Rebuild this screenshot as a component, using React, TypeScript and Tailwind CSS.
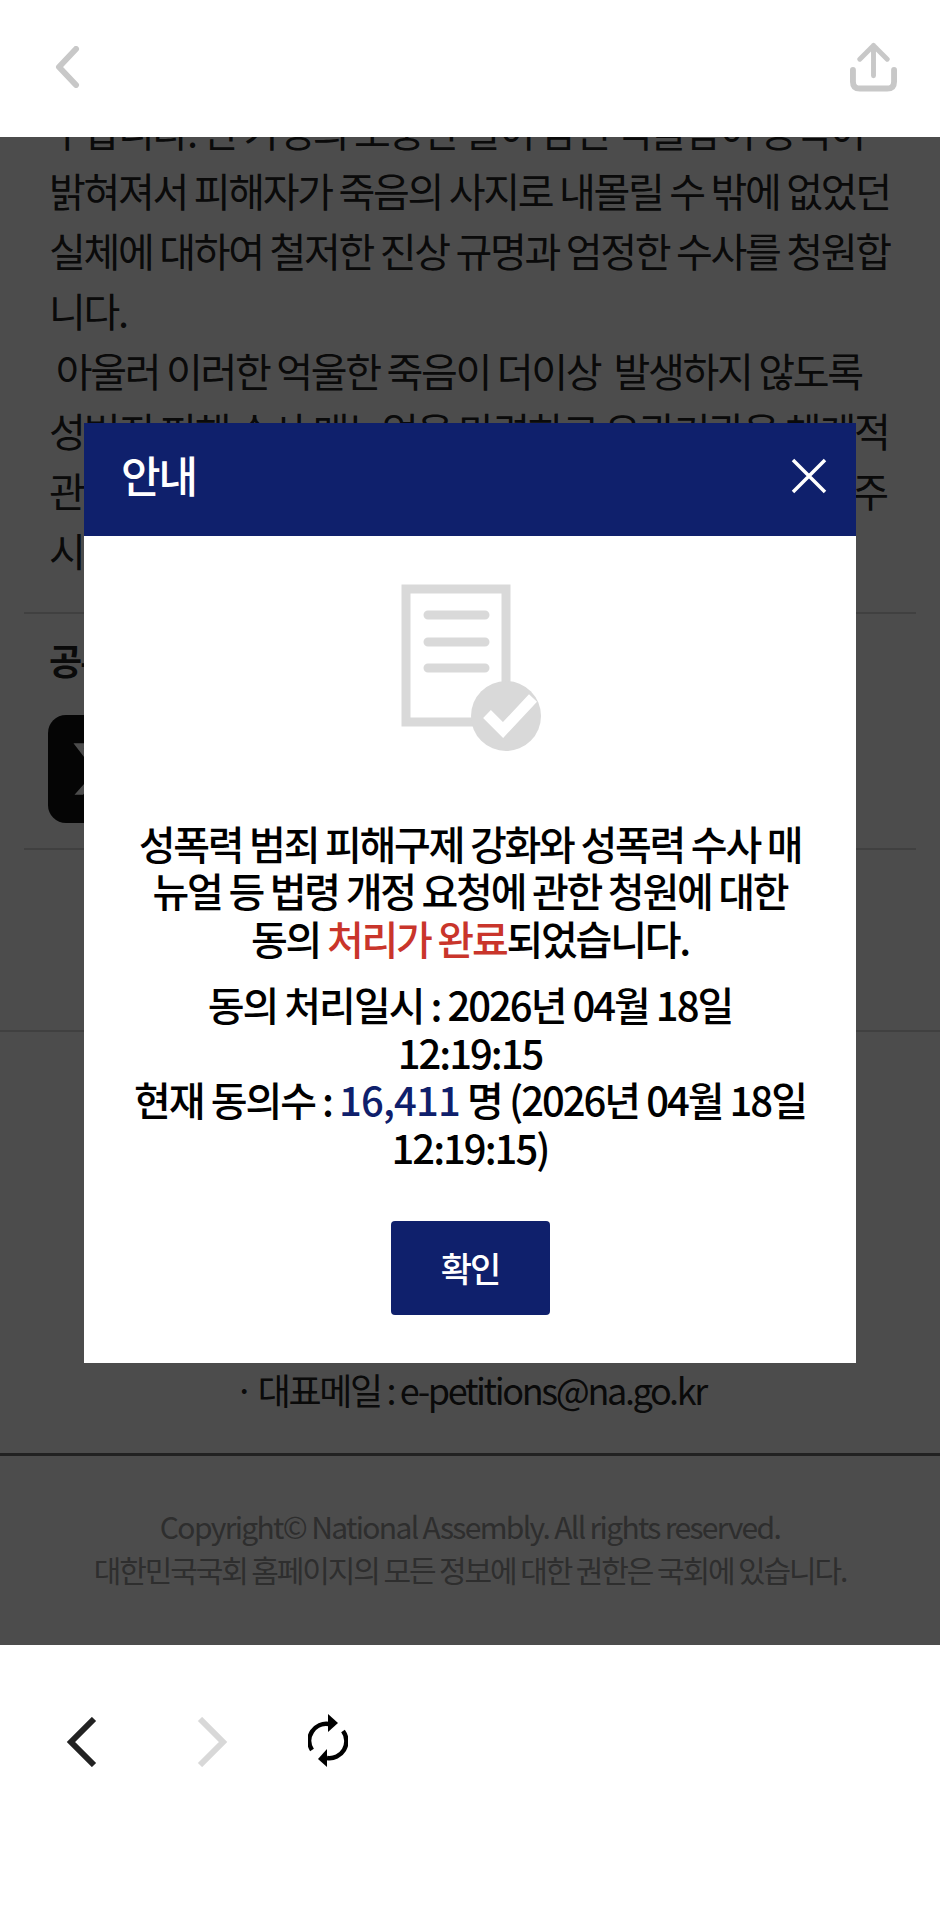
export default function App() {
  return (
    <div className="w-[940px] h-[1920px] flex flex-col bg-white overflow-hidden font-['Noto_Sans_CJK_KR','Noto_Sans',sans-serif] text-[#222]">
      {/* Top bar */}
      <header className="h-[137px] shrink-0 flex items-center justify-between pl-[54px] pr-[43px] pb-[4px]">
        <svg width="26" height="42" viewBox="0 0 26 42" fill="none" stroke="#c8c8c8" strokeWidth="6" strokeLinecap="round" strokeLinejoin="round">
          <path d="M22 3 L5 21 L22 39" />
        </svg>
        <svg width="47" height="50" viewBox="0 0 48 50" fill="none" stroke="#c8c8c8" strokeLinecap="round" strokeLinejoin="round">
          <path d="M24 3 V34 M10 17 L24 3 L38 17" strokeWidth="5" />
          <path d="M3 28 V40 Q3 47 10 47 H38 Q45 47 45 40 V28" strokeWidth="6" />
        </svg>
      </header>

      {/* Page under the dialog */}
      <main className="relative h-[1508px] shrink-0 overflow-hidden">
        <div className="-mt-[37px]">
          <div className="pl-[49px] text-[40px] leading-[60px] tracking-[-0.057em] whitespace-nowrap">
            <div>구합니다. 한 가정의 소중한 딸이 남긴 억울함이 공식이</div>
            <div>밝혀져서 피해자가 죽음의 사지로 내몰릴 수 밖에 없었던</div>
            <div>실체에 대하여 철저한 진상 규명과 엄정한 수사를 청원합</div>
            <div>니다.</div>
            <div className="whitespace-pre"> 아울러 이러한 억울한 죽음이 더이상  발생하지 않도록</div>
            <div className="tracking-[-0.052em]">성범죄 피해 수사 매뉴얼을 마련하고 유관기관을 체계적</div>
            <div className="tracking-[-0.065em]">관리가 이루어질 수 있도록 법령 개정을 적극 추진하여 주</div>
            <div>시기 바랍니다.</div>
          </div>

          <div className="mx-[24px] mt-[32px] border-t-2 border-[#d5d5d5]" />
          <div className="pl-[49px] pt-[20px] text-[36px] leading-[50px] font-bold tracking-[-0.05em]">공유하기</div>
          <div className="ml-[48px] mt-[31px] w-[108px] h-[108px] rounded-[18px] bg-[#111] flex items-center justify-center">
            <svg width="64" height="64" viewBox="0 0 24 24" fill="#fff">
              <path d="M18.2 2.3h3.3l-7.2 8.2 8.5 11.2h-6.7l-5.2-6.8-6 6.8H1.7l7.7-8.8L1.3 2.3h6.8l4.7 6.2zm-1.2 17.5h1.8L7.1 4.1h-2z" />
            </svg>
          </div>
          <div className="mx-[24px] mt-[25px] border-t-2 border-[#d5d5d5]" />
          <div className="mt-[180px] border-t-2 border-[#d5d5d5]" />

          <footer className="h-[421px] flex items-end justify-center pb-[39px] text-[36px] leading-[50px] tracking-[-0.066em]">
            <div>· 대표메일 : e-petitions@na.go.kr</div>
          </footer>
          <div className="border-t-[3px] border-[#6e6e6e]" />
          <div className="pt-[49px] text-center text-[30px] leading-[43px] text-[#999]">
            <div className="tracking-[-0.055em]">Copyright© National Assembly. All rights reserved.</div>
            <div className="tracking-[-0.07em]">대한민국국회 홈페이지의 모든 정보에 대한 권한은 국회에 있습니다.</div>
          </div>
        </div>

        {/* Overlay and dialog */}
        <div className="absolute inset-0 bg-black/70 flex items-center justify-center pt-[3px]">
          <div className="w-[772px] bg-white">
            <div className="h-[113px] bg-[#0f206c] flex items-center justify-between pl-[37px] pr-[28px] text-white">
              <span className="mb-[10px] text-[43px] font-medium tracking-[-0.05em]">안내</span>
              <svg width="38" height="38" viewBox="0 0 38 38" stroke="#fff" strokeWidth="3.5" fill="none" className="mb-[6px]">
                <path d="M3 3 L35 35 M35 3 L3 35" />
              </svg>
            </div>
            <div className="flex flex-col items-center pt-[48px] pb-[47.5px] px-[40px] text-center text-[40px] leading-[47.5px] font-medium tracking-[-0.05em] text-black">
              <svg width="142" height="172" viewBox="0 0 142 172" fill="none" className="ml-[4px]">
                <path d="M105 110 V5 H5 V138 H75" stroke="#d9d9d9" strokeWidth="9" />
                <path d="M27 31 H84 M27 58 H84 M27 84 H84" stroke="#d9d9d9" strokeWidth="9" strokeLinecap="round" />
                <circle cx="105" cy="132" r="35" fill="#d9d9d9" />
                <path d="M86 130 L102 146 L132 114" stroke="#fff" strokeWidth="11" />
              </svg>
              <p className="mt-[64px] tracking-[-0.056em]">
                성폭력 범죄 피해구제 강화와 성폭력 수사 매
                <br />
                뉴얼 등 법령 개정 요청에 관한 청원에 대한
                <br />
                동의 <span className="text-[#c9352b]">처리가 완료</span>되었습니다.
              </p>
              <p className="mt-[19px]">
                동의 처리일시 : 2026년 04월 18일
                <br />
                12:19:15
                <br />
                <span className="tracking-[-0.05em]">
                  현재 동의수 : <span className="text-[#0f206c] tracking-[-0.02em]">16,411</span> 명 (2026년 04월 18일
                </span>
                <br />
                12:19:15)
              </p>
              <button className="mt-[50px] w-[159px] h-[94px] rounded-[4px] bg-[#0f206c] text-white text-[34px]">확인</button>
            </div>
          </div>
        </div>
      </main>

      {/* Browser toolbar */}
      <nav className="flex-1 pl-[66px] pt-[72px] flex items-start">
        <svg width="32" height="50" viewBox="0 0 32 50" fill="none" stroke="#222" strokeWidth="6">
          <path d="M28 2 L5 25 L28 48" />
        </svg>
        <svg width="32" height="50" viewBox="0 0 32 50" fill="none" stroke="#d8d8d8" strokeWidth="6" className="ml-[98px]">
          <path d="M4 2 L27 25 L4 48" />
        </svg>
        <svg width="40" height="54" viewBox="0 0 40 54" className="ml-[80px] -mt-[3px]">
          <path d="M4 36 A17 17 0 0 1 21 10" fill="none" stroke="#000" strokeWidth="4.5" />
          <path d="M20 0 L30 9 L20 18 Z" fill="#000" />
          <path d="M35 17 A17 17 0 0 1 19 44" fill="none" stroke="#000" strokeWidth="4.5" />
          <path d="M19 35 L10 45 L19 53 Z" fill="#000" />
        </svg>
      </nav>
    </div>
  );
}
